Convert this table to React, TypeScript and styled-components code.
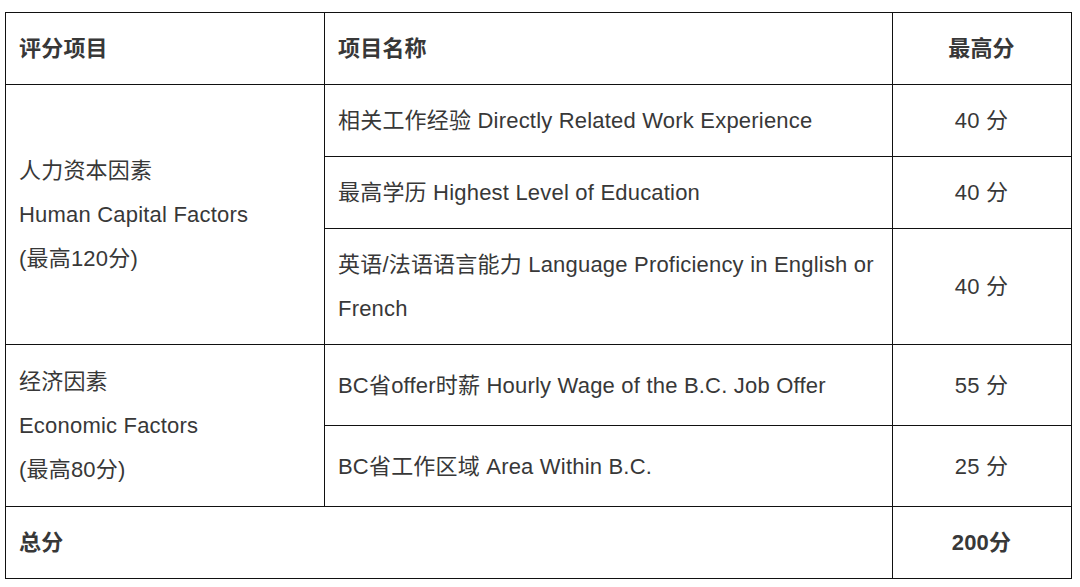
import React from "react";
import styled, { createGlobalStyle } from "styled-components";

const GlobalStyle = createGlobalStyle`
  body {
    margin: 0;
    background: #fff;
    font-family: "Liberation Sans", "Noto Sans CJK SC", sans-serif;
  }
`;

type Item = { name: React.ReactNode; score: string };
type Group = { title: string[]; items: Item[] };

const groups: Group[] = [
  {
    title: ["人力资本因素", "Human Capital Factors", "(最高120分)"],
    items: [
      { name: "相关工作经验 Directly Related Work Experience", score: "40 分" },
      { name: "最高学历 Highest Level of Education", score: "40 分" },
      { name: "英语/法语语言能力 Language Proficiency in English or French", score: "40 分" },
    ],
  },
  {
    title: ["经济因素", "Economic Factors", "(最高80分)"],
    items: [
      { name: "BC省offer时薪 Hourly Wage of the B.C. Job Offer", score: "55 分" },
      { name: "BC省工作区域 Area Within B.C.", score: "25 分" },
    ],
  },
];

function App() {
  return (
    <Page>
      <GlobalStyle />
      <ScoreTable>
        <colgroup>
          <col style={{ width: 319 }} />
          <col style={{ width: 568 }} />
          <col style={{ width: 179 }} />
        </colgroup>
        <thead>
          <tr>
            <Cell $bold>评分项目</Cell>
            <Cell $bold>项目名称</Cell>
            <Cell $bold $center>最高分</Cell>
          </tr>
        </thead>
        <tbody>
          {groups.map((g) =>
            g.items.map((item, i) => (
              <tr key={g.title[0] + i}>
                {i === 0 && (
                  <GroupCell rowSpan={g.items.length}>
                    {g.title.map((t) => (
                      <Line key={t}>{t}</Line>
                    ))}
                  </GroupCell>
                )}
                <Cell>{item.name}</Cell>
                <Cell $center>{item.score}</Cell>
              </tr>
            ))
          )}
          <tr>
            <Cell $bold colSpan={2}>总分</Cell>
            <Cell $bold $center>200分</Cell>
          </tr>
        </tbody>
      </ScoreTable>
    </Page>
  );
}

const Page = styled.div`
  padding: 12px 0 0 5px;
`;

const ScoreTable = styled.table`
  width: 1066px;
  table-layout: fixed;
  border-collapse: collapse;
  color: #383838;
  font-size: 22px;
  line-height: 44px;
  letter-spacing: 0.2px;
`;

const Cell = styled.td<{ $bold?: boolean; $center?: boolean }>`
  border: 1px solid #111;
  padding: 14px 14px 13px 13px;
  vertical-align: middle;
  text-align: ${(p) => (p.$center ? "center" : "left")};
  font-weight: ${(p) => (p.$bold ? 700 : 400)};
`;

const GroupCell = styled(Cell)`
  padding-top: 15px;
  padding-bottom: 14px;
`;

const Line = styled.div``;

export default App;
